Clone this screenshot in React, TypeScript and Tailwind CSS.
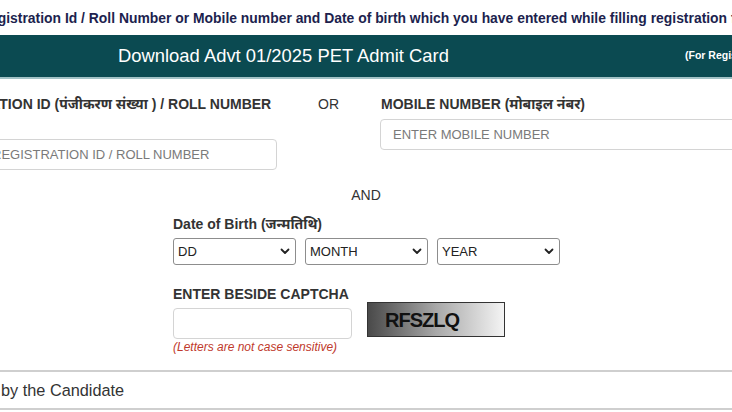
import React from "react";

const font = "font-['Liberation_Sans','Noto_Sans','Noto_Sans_Devanagari',Arial,sans-serif]";

function Chevron() {
  return (
    <svg width="10" height="7" viewBox="0 0 10 7" className="shrink-0">
      <path d="M1.5 1.5 L5 5 L8.5 1.5" fill="none" stroke="#222" strokeWidth="1.8" strokeLinecap="round" strokeLinejoin="round" />
    </svg>
  );
}

function FakeSelect({ label, w }: { label: string; w: string }) {
  return (
    <div className={`${w} h-[27px] border border-[#8d8d8d] rounded-[3px] flex items-center justify-between pl-[4px] pr-[5px] text-[13px] text-[#222] bg-white`}>
      <span>{label}</span>
      <Chevron />
    </div>
  );
}

export default function App() {
  return (
    <div className={`w-[732px] h-[412px] overflow-hidden bg-white ${font}`}>
      <p className="h-[35px] pt-[10px] ml-[-20px] whitespace-nowrap text-[13.9px] leading-[16px] font-bold text-[#201f4e]">
        Registration Id / Roll Number or Mobile number and Date of birth which you have entered while filling registration form.
      </p>
      <div className="h-[44px] bg-[#0b4a51] border-b-2 border-[#a3c2c6] flex items-center whitespace-nowrap">
        <div className="w-[685px] shrink-0 pl-[118px] text-[18.4px] text-white">Download Advt 01/2025 PET Admit Card</div>
        <div className="shrink-0 text-[10.5px] font-bold text-white">(For Registered Candidates)</div>
      </div>

      <div className="flex pt-[16px]">
        <div className="w-[298px] ml-[-21px] shrink-0 flex flex-col">
          <div className="ml-[-51px] h-[18px] whitespace-nowrap text-[14px] leading-[18px] font-bold text-[#333]">
            REGISTRATION ID (पंजीकरण संख्या ) / ROLL NUMBER
          </div>
          <div className="mt-[26px] h-[31px] border border-[#d4d4d4] rounded-[4px] flex items-center pl-[12px] text-[13px] text-[#7a7a7a] whitespace-nowrap">
            REGISTRATION ID / ROLL NUMBER
          </div>
        </div>
        <div className="ml-[41px] w-[62px] shrink-0 h-[18px] text-[14px] leading-[18px] text-[#333]">OR</div>
        <div className="flex-1 flex flex-col">
          <div className="h-[18px] pl-[1px] whitespace-nowrap text-[14px] leading-[18px] font-bold text-[#333]">
            MOBILE NUMBER (मोबाइल नंबर)
          </div>
          <div className="mt-[6px] mr-[-10px] h-[31px] border border-[#d4d4d4] rounded-[4px] flex items-center pl-[12px] text-[13px] text-[#7a7a7a] whitespace-nowrap">
            ENTER MOBILE NUMBER
          </div>
        </div>
      </div>

      <div className="mt-[16px] text-center text-[14px] leading-[18px] text-[#333]">AND</div>

      <div className="ml-[173px] mt-[11px] flex flex-col">
        <div className="h-[18px] whitespace-nowrap text-[14px] leading-[18px] font-bold text-[#333]">Date of Birth (जन्मतिथि)</div>
        <div className="mt-[5px] flex gap-[9px]">
          <FakeSelect label="DD" w="w-[123px]" />
          <FakeSelect label="MONTH" w="w-[123px]" />
          <FakeSelect label="YEAR" w="w-[123px]" />
        </div>

        <div className="mt-[20px] h-[18px] whitespace-nowrap text-[14px] leading-[18px] font-bold text-[#333]">ENTER BESIDE CAPTCHA</div>
        <div className="flex items-start">
          <div className="flex flex-col">
            <div className="mt-[5px] w-[179px] h-[31px] border border-[#d4d4d4] rounded-[4px] bg-white" />
            <div className="mt-[1px] text-[12px] leading-[14px] italic text-[#c0392b] whitespace-nowrap">(Letters are not case sensitive)</div>
          </div>
          <div className="ml-[15px] mt-[-1px] w-[138px] h-[35px] border border-[#333] bg-gradient-to-r from-[#4a4a4a] via-[#a8a8a8] to-[#f4f4f4] flex items-center pl-[17px]">
            <span className="text-[20px] font-bold text-[#111] tracking-[-1px]">RFSZLQ</span>
          </div>
        </div>
      </div>

      <div className="mt-[16px] border-t-2 border-b-2 border-[#cfcfcf] h-[40px] flex items-center pl-[1px] text-[16.3px] text-[#333] whitespace-nowrap">
        by the Candidate
      </div>
    </div>
  );
}
